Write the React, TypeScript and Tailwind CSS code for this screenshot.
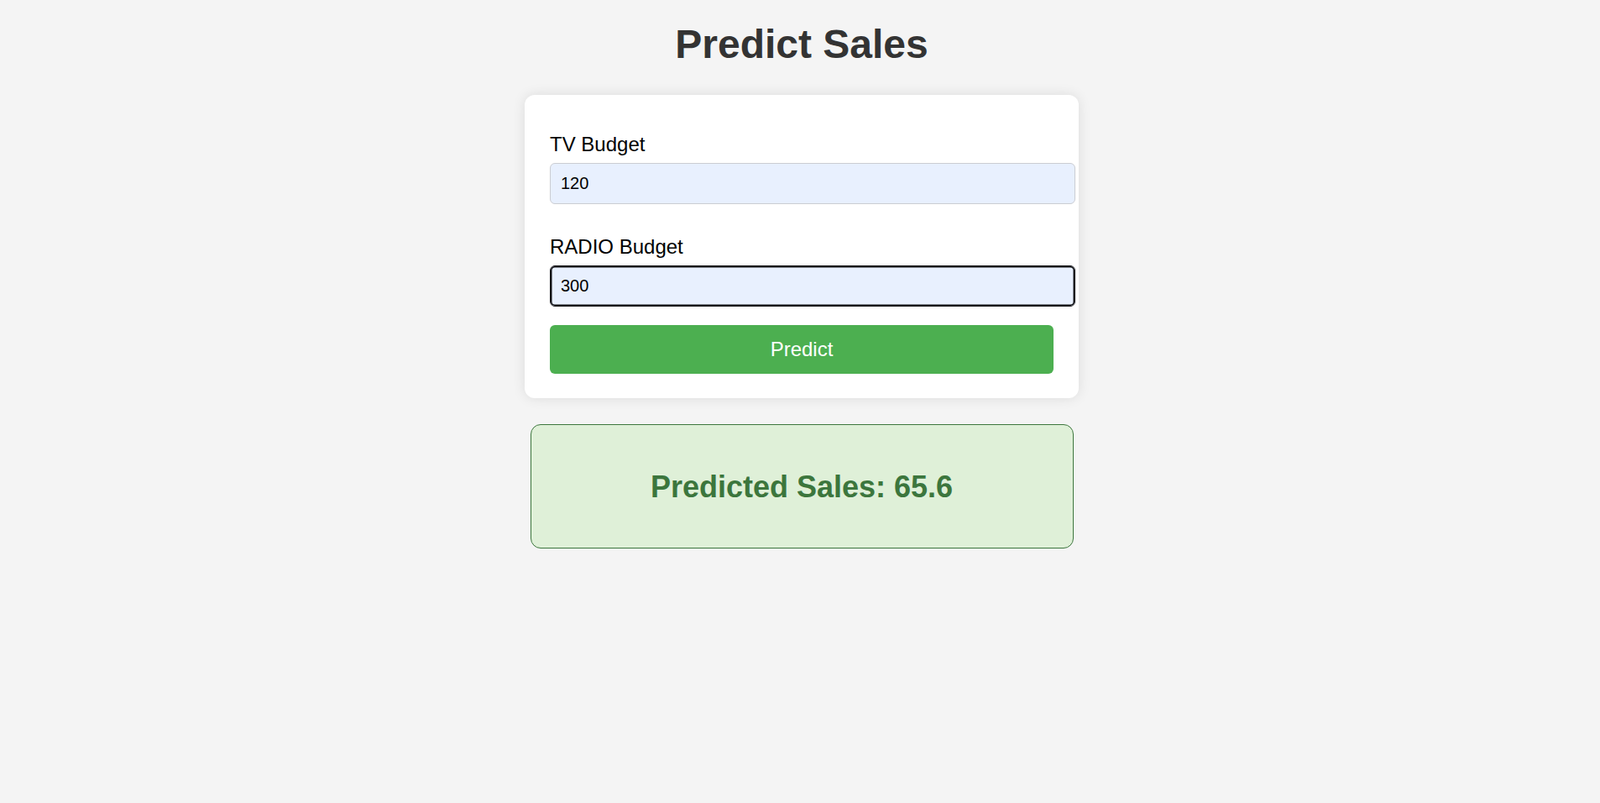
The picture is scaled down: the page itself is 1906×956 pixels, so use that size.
import React from 'react';

// Sales prediction form, rendered at 1.5x the usual CSS sizes to match the reference.
export default function App() {
  return (
    <div className="min-h-screen bg-[#f4f4f4] pl-[4px] font-['Liberation_Sans',Arial,sans-serif]">
      <h1 className="pt-[25px] text-center text-[48px] font-bold leading-[55px] text-[#333]">
        Predict Sales
      </h1>

      <form
        onSubmit={(e) => e.preventDefault()}
        className="mx-auto mt-[33px] w-[660px] rounded-[12px] bg-white px-[30px] pt-[45px] pb-[29px] shadow-[0_0_15px_rgba(0,0,0,0.1)]"
      >
        <label htmlFor="tv" className="block text-[24px] leading-[28px] text-black">
          TV Budget
        </label>
        <input
          id="tv"
          name="tv"
          defaultValue="120"
          className="mt-[8px] box-border block h-[49px] w-[626px] rounded-[6px] border-[1.5px] border-[#cbcdd2] bg-[#e8f0fe] px-[12px] text-[20px] text-black outline-none"
        />

        <label htmlFor="radio" className="mt-[37px] block text-[24px] leading-[28px] text-black">
          RADIO Budget
        </label>
        <input
          id="radio"
          name="radio"
          defaultValue="300"
          className="mt-[8px] box-border block h-[49px] w-[626px] rounded-[6px] border-[1.5px] border-[#101014] bg-[#e8f0fe] px-[12px] text-[20px] text-black shadow-[inset_0_0_0_1.5px_#101014] outline-none"
        />

        <button
          type="submit"
          className="mt-[22px] block h-[58px] w-full rounded-[6px] bg-[#4caf50] text-[24px] text-white"
        >
          Predict
        </button>
      </form>

      <div className="mx-auto mt-[31px] flex h-[148px] w-[647px] items-center justify-center rounded-[12px] border-[1.5px] border-[#3c763d] bg-[#dff0d8]">
        <h2 className="text-[36px] font-bold leading-[41px] text-[#3c763d]">Predicted Sales: 65.6</h2>
      </div>
    </div>
  );
}
